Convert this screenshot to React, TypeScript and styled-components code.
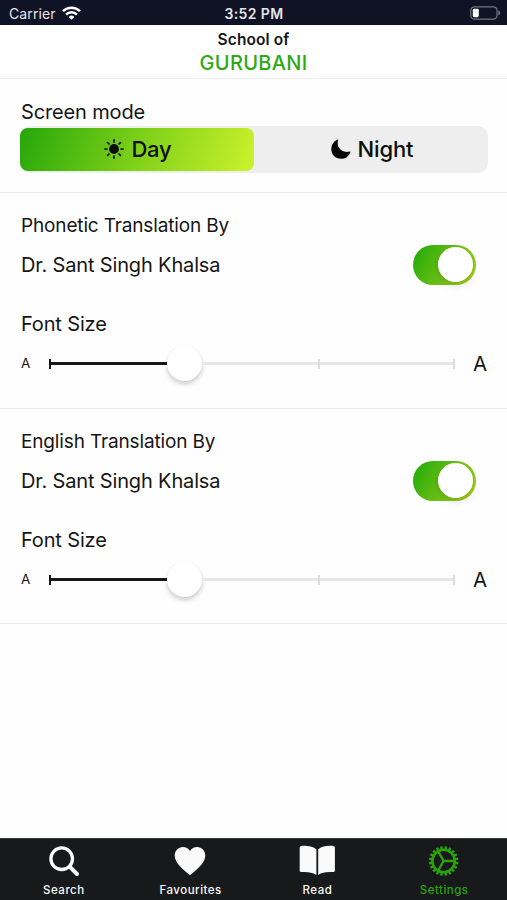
import React, { useState } from "react";
import styled, { createGlobalStyle } from "styled-components";

const GlobalStyle = createGlobalStyle`
  * { box-sizing: border-box; }
  body { margin: 0; background: #fff; }
`;

const Screen = styled.div`
  width: 507px;
  height: 900px;
  display: flex;
  flex-direction: column;
  overflow: hidden;
  background: #fefefe;
  color: #151515;
  font-family: Inter, "Liberation Sans", sans-serif;
`;

const StatusBar = styled.header`
  height: 25px;
  flex: none;
  display: grid;
  grid-template-columns: 1fr auto 1fr;
  align-items: center;
  padding: 2px 6px 0 9px;
  background: #101325;
  color: #e4e5ea;
  font-size: 14px;
  line-height: 22px;
`;

const Carrier = styled.div`
  display: flex;
  align-items: center;
  gap: 6px;
  letter-spacing: 0.1px;
  svg { margin-top: -2px; }
`;

const Clock = styled.div`
  margin-right: 2px;
  font-weight: 600;
  font-size: 14px;
  letter-spacing: 0.4px;
`;

const BatterySlot = styled.div`
  display: flex;
  justify-content: flex-end;
  svg { margin-top: -2px; }
`;

const TitleBar = styled.div`
  height: 54px;
  flex: none;
  display: flex;
  flex-direction: column;
  align-items: center;
  padding-top: 3px;
  border-bottom: 1px solid #ececec;
  background: #fff;
`;

const School = styled.div`
  font-size: 15.5px;
  font-weight: 600;
  line-height: 23px;
  letter-spacing: 0.1px;
`;

const Brand = styled.h1`
  margin: 0;
  font-size: 20px;
  font-weight: 500;
  line-height: 25px;
  letter-spacing: 0.3px;
  color: #2fa812;
`;

const ModeSection = styled.section`
  height: 114px;
  flex: none;
  padding: 20px 19px 0 20px;
  border-bottom: 1px solid #e9e9e9;
`;

const Label = styled.div<{ $small?: boolean }>`
  height: 27px;
  padding-left: 1px;
  font-size: ${({ $small }) => ($small ? 19 : 20)}px;
  line-height: 27px;
  white-space: nowrap;
  letter-spacing: -0.15px;
`;

const Segments = styled.div`
  height: 47px;
  display: grid;
  grid-template-columns: 234px 234px;
  padding: 2px 0;
  border-radius: 10px;
  background: #eeeeee;
`;

const Segment = styled.button<{ $active: boolean }>`
  display: flex;
  align-items: center;
  justify-content: center;
  gap: 7px;
  padding: 0 0 1px 2px;
  border: 0;
  border-radius: 8px;
  background: ${({ $active }) =>
    $active ? "linear-gradient(110deg, #2aa80b 2%, #7ed018 50%, #ccf22b 100%)" : "transparent"};
  font: 500 22px/30px Inter, "Liberation Sans", sans-serif;
  letter-spacing: -0.15px;
  color: #0c0f08;
`;

const TranslationSection = styled.section`
  height: 216px;
  flex: none;
  padding: 19px 20px 0;
  border-bottom: 1px solid #e9e9e9;

  & + & {
    height: 215px;
  }
`;

const AuthorRow = styled.div`
  height: 40px;
  margin-top: 6px;
  display: flex;
  align-items: center;
  justify-content: space-between;
  padding-right: 11.5px;
`;

const Toggle = styled.button<{ $on: boolean }>`
  width: 63px;
  height: 40px;
  flex: none;
  display: flex;
  align-items: center;
  justify-content: ${({ $on }) => ($on ? "flex-end" : "flex-start")};
  padding: 0 2.5px;
  margin-top: -1px;
  border: 0;
  border-radius: 20px;
  background: ${({ $on }) => ($on ? "linear-gradient(120deg, #2eae0b 12%, #a4cf1d 92%)" : "#ddd")};
`;

const Knob = styled.span`
  width: 35px;
  height: 35px;
  border-radius: 50%;
  background: #fff;
  box-shadow: 0 3px 8px rgba(0, 0, 0, 0.15);
`;

const FontSizeLabel = styled(Label)`
  margin-top: 26px;
`;

const SliderRow = styled.div`
  height: 36px;
  margin-top: 7px;
  display: flex;
  align-items: center;
  padding-left: 1px;
`;

const Letter = styled.span<{ $large?: boolean }>`
  flex: none;
  width: ${({ $large }) => ($large ? "auto" : "28px")};
  margin-left: ${({ $large }) => ($large ? "18px" : "0")};
  padding-top: ${({ $large }) => ($large ? "1px" : "0")};
  font-size: ${({ $large }) => ($large ? 20.5 : 13.5)}px;
  line-height: 30px;
`;

const Track = styled.div`
  width: 406px;
  height: 36px;
  flex: none;
  display: grid;
  grid-template-columns: 118px 35px 118px 135px;
  align-items: center;
`;

const Rail = styled.span<{ $filled?: boolean }>`
  height: 3px;
  background: ${({ $filled }) => ($filled ? "#171717" : "#e7e7e7")};
`;

const StopRail = styled(Rail)<{ $start?: boolean }>`
  display: flex;
  align-items: center;
  justify-content: ${({ $start }) => ($start ? "flex-start" : "flex-end")};
  &::before {
    content: "";
    width: 2px;
    height: 10px;
    margin-top: 1px;
    background: ${({ $filled }) => ($filled ? "#171717" : "#dddddd")};
  }
`;

const Thumb = styled.span`
  width: 35px;
  height: 35px;
  border-radius: 50%;
  background: #fff;
  box-shadow: 0 3px 5px rgba(0, 0, 0, 0.2), 0 0 2px rgba(0, 0, 0, 0.04);
`;

const TabBar = styled.nav`
  height: 62px;
  flex: none;
  margin-top: auto;
  display: grid;
  grid-template-columns: repeat(4, 1fr);
  background: #17191a;
  border-top: 1px solid #3a3c3d;
`;

const Tab = styled.button<{ $active?: boolean }>`
  display: flex;
  flex-direction: column;
  align-items: center;
  padding: 4px 0 0;
  border: 0;
  background: none;
  color: ${({ $active }) => ($active ? "#2ba30c" : "#fafafa")};
`;

const TabLabel = styled.span`
  margin-top: 3px;
  padding-left: 1px;
  font: 500 11.5px/17px Inter, "Liberation Sans", sans-serif;
  letter-spacing: 0.5px;
`;

const WifiIcon = () => (
  <svg width="19" height="14" viewBox="0 0 19 14" fill="none" stroke="#fff" strokeWidth="2.5">
    <path d="M1 5.1a12.2 12.2 0 0 1 17 0" />
    <path d="M4.1 8.5a7.8 7.8 0 0 1 10.8 0" />
    <path d="M9.5 13.7 6.7 10.9a4 4 0 0 1 5.6 0z" fill="#fff" stroke="none" />
  </svg>
);

const BatteryIcon = () => (
  <svg width="31" height="14" viewBox="0 0 31 14">
    <rect x="0.8" y="0.8" width="26.2" height="12.4" rx="3.6" fill="none" stroke="#73757f" strokeWidth="1.2" />
    <rect x="2.8" y="2.8" width="6" height="8.4" rx="1.4" fill="#fff" />
    <path d="M28.3 4.6q2 1 2 2.4t-2 2.4z" fill="#73757f" />
  </svg>
);

const SunIcon = () => (
  <svg width="20" height="20" viewBox="0 0 20 20">
    <circle cx="10" cy="10" r="4.9" fill="#080b03" />
    <g stroke="#080b03" strokeWidth="1.7" strokeLinecap="round">
      {[0, 45, 90, 135, 180, 225, 270, 315].map((a) => (
        <path key={a} d="M10 0.9v2" transform={`rotate(${a} 10 10)`} />
      ))}
    </g>
  </svg>
);

const MoonIcon = () => (
  <svg width="20" height="20" viewBox="0 0 20 20">
    <path
      d="M6.6.5q.9-.3.6.5C5.2 7.2 9.6 14.5 18.7 12.6q1.1-.2.6.8A10 10 0 0 1 10 19.7C4.5 19.7.3 15.6.3 10.2.3 5.7 2.9 2 6.6.5z"
      fill="#080808"
    />
  </svg>
);

const SearchIcon = () => (
  <svg width="36" height="36" viewBox="0 0 36 36" fill="none" stroke="currentColor" strokeWidth="3.3">
    <circle cx="16.7" cy="15.7" r="10.8" />
    <path d="m24.8 23.8 7.2 7.2" strokeWidth="4" strokeLinecap="round" />
  </svg>
);

const HeartIcon = () => (
  <svg width="36" height="36" viewBox="0 0 36 36" fill="currentColor">
    <path d="M18 32.2C13 28.2 2.7 20.7 2.7 12.6 2.7 7.6 6.3 3.9 10.9 3.9c3 0 5.6 1.5 7.1 4 1.5-2.5 4.1-4 7.1-4 4.6 0 8.2 3.7 8.2 8.7C33.3 20.7 23 28.2 18 32.2z" />
  </svg>
);

const BookIcon = () => (
  <svg width="36" height="36" viewBox="0 0 36 36" fill="currentColor">
    <path d="M2.3 2.9C8 2.5 13 3.3 17.4 6.2V32C13 29 8 28.7 2.3 29.1Q.7 29.2.7 27.7V4.4Q.7 3 2.3 2.9z" />
    <path d="M34.3 2.9C28 2.5 23 3.3 19.2 6.2V32C23 29 28 28.7 34.3 29.1q1.6.1 1.6-1.4V4.4Q35.9 3 34.3 2.9z" />
  </svg>
);

const GearIcon = () => (
  <svg width="36" height="36" viewBox="0 0 36 36" fill="none" stroke="currentColor">
    <circle cx="17.6" cy="18" r="11.2" strokeWidth="2.5" />
    {Array.from({ length: 20 }, (_, i) => (
      <path key={i} d="M17.6 3.2v3.5" strokeWidth="2.4" transform={`rotate(${i * 18 + 9} 17.6 18)`} />
    ))}
    <path d="M17.6 18h11M17.6 18l-5.5-9.6M17.6 18l-5.5 9.6" strokeWidth="2.3" />
  </svg>
);

const Translation = ({ title }: { title: string }) => {
  const [on, setOn] = useState(true);
  return (
    <TranslationSection>
      <Label $small>{title}</Label>
      <AuthorRow>
        <Label>Dr. Sant Singh Khalsa</Label>
        <Toggle $on={on} onClick={() => setOn(!on)} aria-label={title}>
          <Knob />
        </Toggle>
      </AuthorRow>
      <FontSizeLabel>Font Size</FontSizeLabel>
      <SliderRow>
        <Letter>A</Letter>
        <Track>
          <StopRail $filled $start />
          <Thumb />
          <StopRail />
          <StopRail />
        </Track>
        <Letter $large>A</Letter>
      </SliderRow>
    </TranslationSection>
  );
};

export default function App() {
  const [mode, setMode] = useState("day");
  return (
    <Screen>
      <GlobalStyle />
      <StatusBar>
        <Carrier>
          Carrier
          <WifiIcon />
        </Carrier>
        <Clock>3:52 PM</Clock>
        <BatterySlot>
          <BatteryIcon />
        </BatterySlot>
      </StatusBar>
      <TitleBar>
        <School>School of</School>
        <Brand>GURUBANI</Brand>
      </TitleBar>
      <ModeSection>
        <Label>Screen mode</Label>
        <Segments>
          <Segment $active={mode === "day"} onClick={() => setMode("day")}>
            <SunIcon />
            Day
          </Segment>
          <Segment $active={mode === "night"} onClick={() => setMode("night")}>
            <MoonIcon />
            Night
          </Segment>
        </Segments>
      </ModeSection>
      <Translation title="Phonetic Translation By" />
      <Translation title="English Translation By" />
      <TabBar>
        <Tab>
          <SearchIcon />
          <TabLabel>Search</TabLabel>
        </Tab>
        <Tab>
          <HeartIcon />
          <TabLabel>Favourites</TabLabel>
        </Tab>
        <Tab>
          <BookIcon />
          <TabLabel>Read</TabLabel>
        </Tab>
        <Tab $active>
          <GearIcon />
          <TabLabel>Settings</TabLabel>
        </Tab>
      </TabBar>
    </Screen>
  );
}
